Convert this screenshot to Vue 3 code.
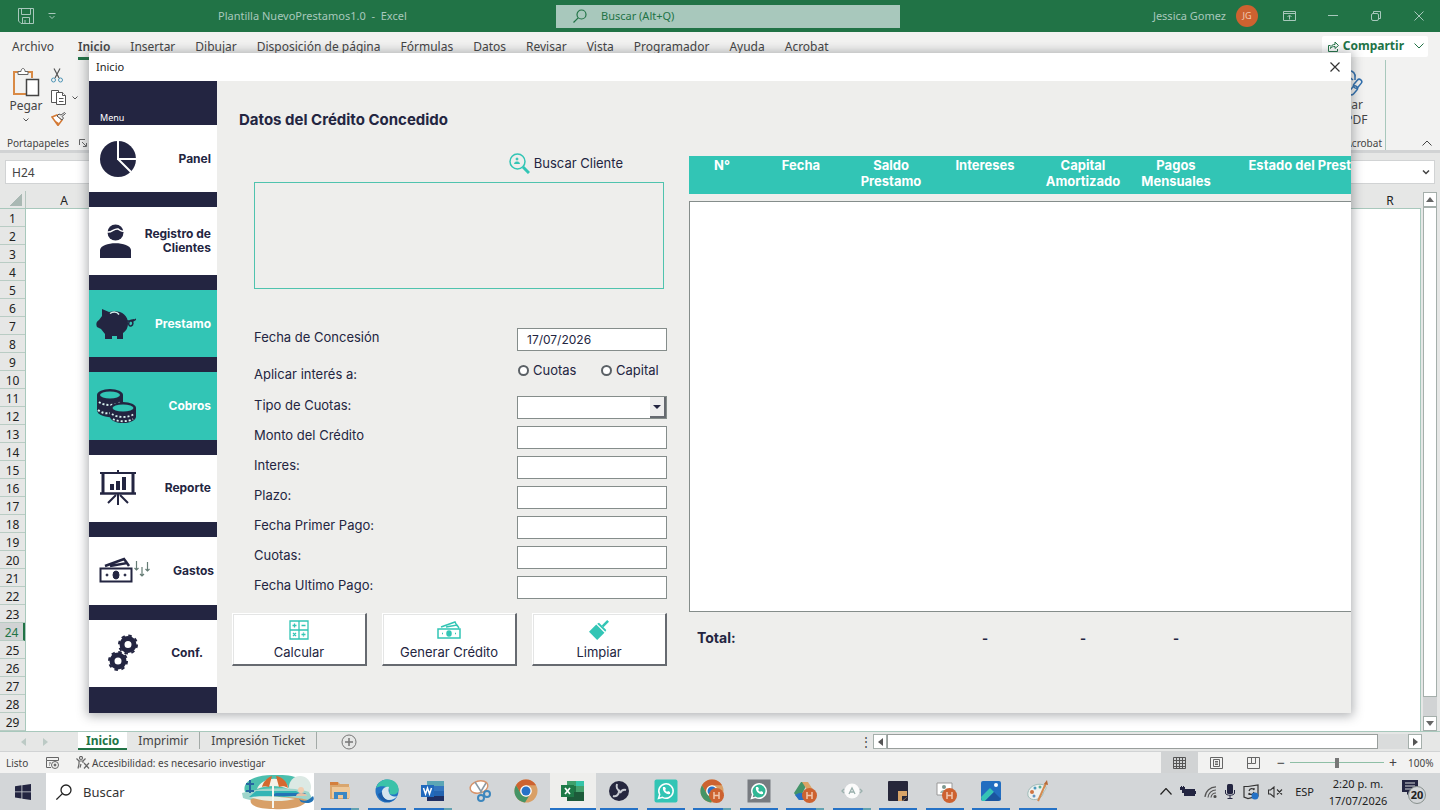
<script setup>
import { ref } from 'vue'

const ribbonTabs = ['Archivo', 'Inicio', 'Insertar', 'Dibujar', 'Disposición de página', 'Fórmulas', 'Datos', 'Revisar', 'Vista', 'Programador', 'Ayuda', 'Acrobat']
const rows = Array.from({ length: 29 }, (_, i) => i + 1)

const menu = [
  { id: 'panel', label: 'Panel' },
  { id: 'clientes', label: 'Registro de Clientes' },
  { id: 'prestamo', label: 'Prestamo', active: true },
  { id: 'cobros', label: 'Cobros', active: true },
  { id: 'reporte', label: 'Reporte' },
  { id: 'gastos', label: 'Gastos' },
  { id: 'conf', label: 'Conf.' }
]

const fields = [
  { id: 'monto', label: 'Monto del Crédito' },
  { id: 'interes', label: 'Interes:' },
  { id: 'plazo', label: 'Plazo:' },
  { id: 'primer', label: 'Fecha Primer Pago:' },
  { id: 'cuotas', label: 'Cuotas:' },
  { id: 'ultimo', label: 'Fecha Ultimo Pago:' }
]

const columns = ['N°', 'Fecha', 'Saldo Prestamo', 'Intereses', 'Capital Amortizado', 'Pagos Mensuales', 'Estado del Prest']
const totals = ['Total:', '', '', '-', '-', '-', '']

const apps = [
  { id: 'files', name: 'Explorador', run: true, many: true },
  { id: 'edge', name: 'Edge', run: true },
  { id: 'word', name: 'Word', run: true, many: true },
  { id: 'snip', name: 'Recortes' },
  { id: 'chrome', name: 'Chrome' },
  { id: 'excel', name: 'Excel', run: true, active: true },
  { id: 'obs', name: 'OBS', run: true },
  { id: 'whatsapp', name: 'WhatsApp', run: true },
  { id: 'chrome2', name: 'Chrome perfil H', run: true, many: true },
  { id: 'whatsapp2', name: 'WhatsApp Web', run: true },
  { id: 'drive', name: 'Drive', run: true, many: true },
  { id: 'anydesk', name: 'Asistente', run: true, many: true },
  { id: 'notes', name: 'Notas', run: true },
  { id: 'meet', name: 'Contactos', run: true },
  { id: 'photos', name: 'Fotos', run: true },
  { id: 'paint', name: 'Paint', run: true }
]

const fecha = ref('17/07/2026')
const tipo = ref('')
const zoom = ref(50)
</script>

<template>
  <div class="desktop">
    <header class="titlebar">
      <div class="quick">
        <button aria-label="Guardar">
          <svg width="16" height="16" viewBox="0 0 16 16" fill="none" stroke="#a8c8bc"><path d="M.5.5h15v15H3L.5 13zM3.5.5v6h9v-6M4.500 15.500v-6h7v6M7 12v3.500" /></svg>
        </button>
        <button aria-label="Personalizar">
          <svg width="8" height="8" viewBox="0 0 8 8" fill="none" stroke="#a8c8bc"><path d="M.5 1.500h7M1.500 4 4 6.500 6.500 4" /></svg>
        </button>
      </div>
      <div class="doc">Plantilla NuevoPrestamos1.0 &nbsp;-&nbsp; Excel</div>
      <label class="search">
        <svg width="14" height="14" viewBox="0 0 14 14" fill="none" stroke="#217346" stroke-width="1.200"><circle cx="8.500" cy="5.500" r="4.500" /><path d="M5.200 8.800.5 13.500" /></svg>
        <input type="text" placeholder="Buscar (Alt+Q)" aria-label="Buscar" />
      </label>
      <div class="account">
        <span>Jessica Gomez</span>
        <span class="avatar">JG</span>
      </div>
      <div class="controls">
        <button aria-label="Cinta"><svg width="13" height="10" viewBox="0 0 13 10" fill="none" stroke="#a8c8bc"><path d="M.5.5h12v9H.5zM.5 2.500h12M6.500 8.500V4.500M4.500 6l2-2 2 2" /></svg></button>
        <button aria-label="Minimizar"><svg width="10" height="10" viewBox="0 0 10 10" stroke="#a8c8bc"><path d="M0 4.500h10" /></svg></button>
        <button aria-label="Restaurar"><svg width="10" height="10" viewBox="0 0 10 10" fill="none" stroke="#a8c8bc"><rect x=".5" y="2.500" width="7" height="7" rx="1.500" /><path d="M2.500 2V.5h7v7H8" /></svg></button>
        <button aria-label="Cerrar"><svg width="10" height="10" viewBox="0 0 10 10" stroke="#a8c8bc"><path d="m.5.5 9 9m0-9-9 9" /></svg></button>
      </div>
    </header>

    <nav class="tabs">
      <a v-for="t in ribbonTabs" :key="t" href="#" :class="{ on: t === 'Inicio' }">{{ t }}</a>
      <button class="share">
        <svg width="11" height="11" viewBox="0 0 11 11" fill="none" stroke="#217346"><path d="M2.500 4.500h-2v6h9V8M2.500 7.500c.3-3 2-4 4.500-4V1l3.500 3.500L7 7.500V5.500c-2 0-3.500.3-4.500 2z" /></svg>
        <b>Compartir</b>
        <svg width="10" height="6" viewBox="0 0 10 6" fill="none" stroke="#217346"><path d="m.5.5 4.500 4.500L9.500.5" /></svg>
      </button>
    </nav>

    <section class="ribbon">
      <div class="clipboard">
        <div class="tools">
          <button class="paste">
            <svg width="28" height="30" viewBox="0 0 28 30" fill="none"><path d="M14 27H2V5h4M16 5h4v6" stroke="#d98a45" stroke-width="2" /><path d="M6 7.500v-3h3c0-4 4-4 4 0h3v3z" fill="#fff" stroke="#666" /><path d="M14.500 12.500h12v16h-12z" fill="#fff" stroke="#444" stroke-width="1.500" /></svg>
            <span>Pegar</span>
            <svg width="6" height="4" viewBox="0 0 6 4" fill="none" stroke="#555"><path d="m.5.5 2.500 2.500L5.500.5" /></svg>
          </button>
          <div class="mini">
            <svg width="12" height="15" viewBox="0 0 12 15" fill="none"><path d="M3 .5 8 10M9 .5 4 10" stroke="#555" stroke-width="1.200" /><circle cx="2.500" cy="12" r="2" stroke="#4d94b5" /><circle cx="9.500" cy="12" r="2" stroke="#4d94b5" /></svg>
            <div class="copy">
              <svg width="16" height="15" viewBox="0 0 16 15" fill="#fff" stroke="#555"><path d="M.5.5h7v12h-7z" /><path d="M5.500 2.500h6l3 3v9h-9z" /><path d="M11.500 2.500v3h3M8 8.500h4.500M8 11.500h4.500" /></svg>
              <svg width="6" height="4" viewBox="0 0 6 4" fill="none" stroke="#555"><path d="m.5.5 2.500 2.500L5.500.5" /></svg>
            </div>
            <svg width="15" height="14" viewBox="0 0 15 14"><path d="M1 5 6 3l5 5-4 5.500z" fill="#fff" stroke="#d47a35" stroke-width="1.500" /><path d="m3 8 5 3-1 2.500z" fill="#d47a35" /><path d="m6 4 5 4 1.500-2-1.500-1.500L14.500 1.500 13.500.5 10 3 8 2z" fill="#eee" stroke="#555" /></svg>
          </div>
        </div>
        <div class="caption"><span>Portapapeles</span><svg width="8" height="8" viewBox="0 0 8 8" fill="none" stroke="#666"><path d="M.5 6V.5H6M3 3l4 4M7.500 4v3.500H4" /></svg></div>
      </div>
      <div class="acrobat">
        <svg width="30" height="28" viewBox="0 0 30 28" fill="none" stroke="#2f6fae" stroke-width="1.500"><path d="M3 20V2h12c5-1 8 3 7 7v2M12 10c3-2 6-1 8 1" /><rect x="20" y="12" width="10" height="5" rx="2.500" transform="rotate(-50 25 15)" /><rect x="15" y="19" width="10" height="5" rx="2.500" transform="rotate(-50 20 21)" /></svg>
        <span>Crear</span><span>un PDF</span>
        <small>Acrobat</small>
      </div>
      <button class="collapse" aria-label="Contraer cinta"><svg width="10" height="6" viewBox="0 0 10 6" fill="none" stroke="#444"><path d="M.5 5.500 5 1l4.500 4.500" /></svg></button>
    </section>

    <section class="formula">
      <input class="namebox" type="text" value="H24" aria-label="Cuadro de nombres" />
      <div class="fx"><input type="text" aria-label="Barra de fórmulas" /><svg width="8" height="5" viewBox="0 0 8 5" fill="none" stroke="#444" stroke-width="1.500"><path d="m1 .5 3 3 3-3" /></svg></div>
    </section>

    <section class="sheet">
      <div class="grid">
        <div class="colheads"><span class="corner"></span><span class="col-a">A</span><span class="col-r">R</span></div>
        <div class="gridbody">
          <ol class="rowheads"><li v-for="r in rows" :key="r" :class="{ sel: r === 24 }">{{ r }}</li></ol>
          <div class="cells"></div>
        </div>
      </div>
      <div class="vscroll">
        <button aria-label="Arriba"><svg width="8" height="5" viewBox="0 0 8 5"><path d="m0 5 4-5 4 5z" fill="#666" /></svg></button>
        <i class="thumb"></i><i class="rest"></i>
        <button aria-label="Abajo"><svg width="8" height="5" viewBox="0 0 8 5"><path d="m0 0 4 5 4-5z" fill="#666" /></svg></button>
      </div>
    </section>

    <section class="sheettabs">
      <div class="arrows"><svg width="5" height="8" viewBox="0 0 5 8"><path d="M5 0v8L0 4z" fill="#bccac5" /></svg><svg width="5" height="8" viewBox="0 0 5 8"><path d="M0 0v8l5-4z" fill="#bccac5" /></svg></div>
      <button class="st on">Inicio</button>
      <button class="st">Imprimir</button>
      <button class="st">Impresión Ticket</button>
      <button class="add" aria-label="Hoja nueva"><svg width="16" height="16" viewBox="0 0 16 16" fill="none" stroke="#777"><circle cx="8" cy="8" r="7" /><path d="M4 8h8M8 4v8" stroke-width="1.500" /></svg></button>
      <div class="hscroll">
        <span class="dots">⋮</span>
        <button aria-label="Izquierda"><svg width="5" height="8" viewBox="0 0 5 8"><path d="M5 0v8L0 4z" fill="#555" /></svg></button>
        <i class="thumb"></i><i class="rest"></i>
        <button aria-label="Derecha"><svg width="5" height="8" viewBox="0 0 5 8"><path d="M0 0v8l5-4z" fill="#555" /></svg></button>
      </div>
    </section>

    <section class="status">
      <span class="ready">Listo</span>
      <svg width="13" height="12" viewBox="0 0 13 12" fill="none" stroke="#666"><path d="M.5.5h12v3H.5zM.5 3.500v7H5M3 6h2M3 8h1" /><circle cx="9" cy="8" r="3.500" /><circle cx="9" cy="8" r="1" fill="#555" /></svg>
      <span class="access">
        <svg width="14" height="13" viewBox="0 0 14 13" fill="none" stroke="#666" stroke-width="1.200"><circle cx="5" cy="2" r="1.500" /><path d="M.5 2.500 3 5v3l-1 4.500M9.500 2.500 7 5v2M3 5h4M5 8l-1 3.500M8 7l5 5.500M13 7l-5 5.500" /></svg>
        Accesibilidad: es necesario investigar
      </span>
      <div class="views">
        <button class="on" aria-label="Normal"><svg width="13" height="12" viewBox="0 0 13 12" fill="none" stroke="#555"><path d="M.5.5h12v11H.5zM3.500.5v11M6.500.5v11M9.500.5v11M.5 3.500h12M.5 6.500h12M.5 9.500h12" /></svg></button>
        <button aria-label="Diseño de página"><svg width="13" height="12" viewBox="0 0 13 12" fill="none" stroke="#666"><path d="M.5.5h12v11H.5zM3.500 2.500h6v7h-6zM5 4.500h3M5 6h3M5 7.500h3" /></svg></button>
        <button aria-label="Salto de página"><svg width="13" height="12" viewBox="0 0 13 12" fill="none" stroke="#666"><path d="M.5.5h12v11H.5zM4.500.5v6h-4M8.500.5v6h-4" /></svg></button>
      </div>
      <span class="sign">−</span>
      <input v-model="zoom" class="zoom" type="range" aria-label="Zoom" />
      <span class="sign">+</span>
      <span class="pct">100%</span>
    </section>

    <footer class="taskbar">
      <button class="start" aria-label="Inicio"><svg width="16" height="16" viewBox="0 0 16 16" fill="#232541"><path d="M0 2.200 6.500 1.300v6.200H0zM7.300 1.200 16 0v7.500H7.300zM0 8.300h6.500v6.200L0 13.600zM7.300 8.300H16V16l-8.700-1.200z" /></svg></button>
      <label class="tasksearch">
        <svg width="16" height="16" viewBox="0 0 16 16" fill="none" stroke="#222" stroke-width="1.300"><circle cx="10" cy="6" r="5" /><path d="m6.400 9.600-6 6" /></svg>
        <input type="text" placeholder="Buscar" aria-label="Buscar en Windows" />
        <svg class="beach" width="73" height="36" viewBox="0 0 73 36">
          <path d="M4 18C0 6 18 0 34 1c20-1 34 5 34 15z" fill="#4cbfae" />
          <ellipse cx="59" cy="13" rx="11" ry="11" fill="#dce9e4" />
          <path d="M1 19c15-5 48-7 67-1l4 8c-20 6-52 4-70-2z" fill="#9fd5cb" />
          <path d="M15 17h40l8 4-20 2H8z" fill="#32b5b5" />
          <path d="M35 19h30l-4 3H30z" fill="#2473b5" />
          <path d="M10 25c12-3 42-3 57 1-5 8-20 10-35 9-13 0-25-3-22-10z" fill="#d8a068" />
          <path d="M10 23c14-2 34 0 44 2-10 3-34 3-44-2z" fill="#e6ece2" />
          <path d="M58 25c5 3 9 2 14-3 3 5-3 9-12 6z" fill="#2473b5" />
          <path d="M16 15C20 3 44 0 48 15c-10-4-23-4-32 0z" fill="#f6f2e9" />
          <path d="M21 13c1-5 5-9 10-11l-3 11c-3-1-5-1-7 0zM35 2c7 1 11 6 12 12-3-2-6-2-9-1z" fill="#d5692f" />
          <path d="M32 12v22" stroke="#f7f7f0" stroke-width="2" />
          <path d="M9 6v13m-4-9h8M5 17h8" stroke="#2667a0" stroke-width="2" />
          <circle cx="60" cy="16" r="3" fill="#f1cdb0" /><path d="M55 22c0-4 10-4 11 0z" fill="#e6c1a6" />
        </svg>
      </label>
      <div class="apps">
        <button v-for="a in apps" :key="a.id" :aria-label="a.name" :class="{ run: a.run, active: a.active, many: a.many }">
          <svg width="24" height="24" viewBox="0 0 24 24">
            <template v-if="a.id === 'files'"><path d="M2 3h8l2 2h9v15H2z" fill="#d9a66e" /><path d="M4 8h18v11H4z" fill="#edc89a" /><path d="M2 3h8v3H2z" fill="#d47f3d" /><path d="M6 13h13v7h-4v-4h-5v4H6z" fill="#3b87c4" /></template>
            <template v-else-if="a.id === 'edge'"><circle cx="12" cy="12" r="11.500" fill="#2474c4" /><path d="M1 9C3 2 9 0 13 .5c7 .5 11 5 10.500 11C22 17 15 16 14 14c3-6-7-9-13-5z" fill="#3bc2a9" /><path d="M14 8c-5-1-8 3-7 8 1 3 4 5 7 5 4 0 7-2 8-4-5 2-10-2-8-9z" fill="#d4e5ef" /><path d="M7 13c0 6 5 10 12 8-6 4-15 1-16-6z" fill="#1b5ba6" /></template>
            <template v-else-if="a.id === 'word'"><path d="M6 2h17v5H6z" fill="#5ca6b5" /><path d="M6 7h17v5H6z" fill="#3576bf" /><path d="M6 12h17v5H6z" fill="#2464b0" /><path d="M6 17h17v5H6z" fill="#1f2f63" /><path d="M0 6h13v12H0z" fill="#2069bd" /><path d="m2.500 9 2 6 2-6 2 6 2-6" fill="none" stroke="#fff" stroke-width="1.500" /></template>
            <template v-else-if="a.id === 'snip'"><ellipse cx="11" cy="8" rx="9" ry="6" fill="#fff" stroke="#d9946a" stroke-width="1.500" transform="rotate(-15 11 8)" /><path d="m7 3 7 11M18 4l-6 10" stroke="#8b99a3" stroke-width="1.500" /><circle cx="13" cy="19" r="3" fill="none" stroke="#3c86bd" stroke-width="2" /><circle cx="19" cy="15" r="3" fill="none" stroke="#3c86bd" stroke-width="2" /></template>
            <template v-else-if="a.id === 'chrome' || a.id === 'chrome2'"><circle cx="12" cy="12" r="11.500" fill="#d9a066" /><path d="M2 6.200A11.500 11.500 0 0 1 22 6.200H12a6 6 0 0 0-5.500 8z" fill="#cd6230" /><path d="M2 6.200 7 15a6 6 0 0 0 8 2l-4 6.500A11.500 11.500 0 0 1 2 6.200z" fill="#459466" /><circle cx="12" cy="12" r="5.800" fill="#fff" /><circle cx="12" cy="12" r="4.500" fill="#2771c7" /></template>
            <template v-else-if="a.id === 'excel'"><path d="M6 2h9v5H6z" fill="#3fa06c" /><path d="M15 2h8v5h-8z" fill="#35c4a8" /><path d="M6 7h9v6H6z" fill="#217346" /><path d="M15 7h8v6h-8z" fill="#45a16d" /><path d="M6 13h17v9H6z" fill="#1d5b3a" /><path d="M0 6h13v12H0z" fill="#1e7a48" /><path d="m4 9 5 6M9 9l-5 6" stroke="#fff" stroke-width="1.700" /></template>
            <template v-else-if="a.id === 'obs'"><circle cx="12" cy="12" r="10" fill="#26273f" /><path d="M10 5c-1 3 0 6 3 7M19 11c-3-1-5 1-6 3M6 17c3 1 6-1 6-5" fill="none" stroke="#c8cbd2" stroke-width="2" /></template>
            <template v-else-if="a.id === 'whatsapp' || a.id === 'whatsapp2'"><rect x=".5" y=".5" width="23" height="23" :rx="a.id === 'whatsapp' ? 2 : 0" :fill="a.id === 'whatsapp' ? '#32c5b5' : '#777b80'" /><circle v-if="a.id === 'whatsapp2'" cx="12" cy="12" r="7" fill="#32b795" /><path d="m4.500 19.500 1.200-4A7.200 7.200 0 1 1 8.500 18.300z" fill="none" stroke="#fff" stroke-width="1.500" /><path d="M9 8c-1 4 3 8 7 7l0-2-2-1-1 1-2-2 1-1-1-2z" fill="#fff" /></template>
            <template v-else-if="a.id === 'drive'"><path d="M8 3h7l-9 18-5-7z" fill="#43946a" /><path d="M9 3h6l7 11h-6z" fill="#dba466" /><path d="M6 14h16l-4 7H6l-4-5z" fill="#2771c7" /></template>
            <template v-else-if="a.id === 'anydesk'"><circle cx="12" cy="12" r="7.500" fill="#fbfbfb" /><path d="m9 15 3-6 3 6M10 13h4M4 10l-2 2 2 2M20 10l2 2-2 2" fill="none" stroke="#9ab0ad" stroke-width="1.300" /></template>
            <template v-else-if="a.id === 'notes'"><rect x="2" y="2" width="20" height="20" rx="1" fill="#26273a" /><path d="M12 12h9v6l-4 4h-5z" fill="#d8a468" /><path d="M16 22v-5h6z" fill="#26273a" /></template>
            <template v-else-if="a.id === 'meet'"><path d="M4 4h15v12H4z" fill="#fff" stroke="#999" /><circle cx="11" cy="8" r="2" fill="#7c9990" /><path d="M7 14c1-4 7-4 8 0z" fill="#9cb6ae" /></template>
            <template v-else-if="a.id === 'photos'"><rect x="2" y="2" width="20" height="20" rx="2" fill="#236ec0" /><path d="m2 18 9-9 4 4-9 9H3z" fill="#35c4b5" /><path d="m15 13 7 7-3 2H6z" fill="#1b559f" /><circle cx="17" cy="6" r="2" fill="#fff" /></template>
            <template v-else><path d="M2 17C0 9 10 3 18 6c5 3-1 6-1 9-2 6-12 8-15 2z" fill="#eef1ee" stroke="#9ebbb9" /><circle cx="6" cy="13" r="2" fill="#cf7440" /><circle cx="9" cy="9" r="1.500" fill="#4b9bc0" /><circle cx="14" cy="8" r="1.500" fill="#57ae96" /><circle cx="8" cy="17" r="1.500" fill="#6095c0" /><path d="M20 4 12 22" stroke="#d28a50" stroke-width="2" /><path d="m18 5 3-4 1 5z" fill="#b56a38" /></template>
            <template v-if="['chrome2', 'drive', 'meet'].includes(a.id)"><circle cx="16.500" cy="16.500" r="7.500" fill="#cd6230" /><path d="M14 13v7M19 13v7M14 16.500h5" stroke="#f0c6ad" stroke-width="1.500" /></template>
          </svg>
        </button>
      </div>
      <div class="tray">
        <svg width="12" height="7" viewBox="0 0 12 7" fill="none" stroke="#222" stroke-width="1.200"><path d="m.5 6.500 5.500-6 5.500 6" /></svg>
        <svg width="16" height="11" viewBox="0 0 16 11" fill="#232541"><path d="M3 3h12v7H4V7H2zM15 5h1v3h-1z" /><path d="M0 1h1V0h1v1h1V0h1v1h1v3H3v3H2V4H0z" /></svg>
        <svg width="13" height="12" viewBox="0 0 13 12" fill="none" stroke="#555" stroke-width="1.200"><path d="M1 11A11 11 0 0 1 12 .8M4 11.500A8 8 0 0 1 12 4M7 11.500A5 5 0 0 1 12 7" /><circle cx="11" cy="10.500" r="1" fill="#222" /></svg>
        <svg width="10" height="15" viewBox="0 0 10 15"><rect x="2" width="6" height="10" rx="1.500" fill="#232541" /><path d="M.5 6v3c0 3 9 3 9 0V6M5 11.500V14M2.500 14.500h5" fill="none" stroke="#232541" /></svg>
        <svg width="17" height="16" viewBox="0 0 17 16" fill="none" stroke="#333" stroke-width="1.200"><path d="M1 2.500h4L15 1v11l-10 2.500L1 13zM1 2.500V13M6 7c1-3 4-3 5-1V4M11 8c-1 3-4 3-5 1v2" /><circle cx="12" cy="12" r="3.500" fill="#2572c6" stroke="none" /></svg>
        <svg width="15" height="12" viewBox="0 0 15 12" fill="none" stroke="#333" stroke-width="1.100"><path d="M.5 4h2L6 1v10L2.500 8h-2zM9 3.500l5 5m0-5-5 5" /></svg>
        <span>ESP</span>
        <div class="clock"><span>2:20 p. m.</span><span>17/07/2026</span></div>
        <div class="notice"><svg width="16" height="15" viewBox="0 0 16 15"><path d="M0 0h16v12h-8l-3 3v-3H0z" fill="#232541" /><path d="M3 3h10M3 6h10M3 9h6" stroke="#d3d6d8" /></svg><b>20</b></div>
      </div>
    </footer>

    <div class="dialog" role="dialog" aria-label="Inicio">
      <div class="dlgtitle"><span>Inicio</span><button aria-label="Cerrar"><svg width="10" height="10" viewBox="0 0 10 10" stroke="#333" stroke-width="1.200"><path d="m.5.5 9 9m0-9-9 9" /></svg></button></div>
      <div class="dlgbody">
        <aside>
          <div class="menuhead">Menu</div>
          <div class="menulist">
            <button v-for="m in menu" :key="m.id" :class="[m.id, { active: m.active }]">
              <svg v-if="m.id === 'panel'" width="36" height="36" viewBox="0 0 36 36"><circle cx="18" cy="18" r="18" fill="#232541" /><path d="M18 0v18h18M18 18l13 13" fill="none" stroke="#fff" stroke-width="2" /></svg>
              <svg v-else-if="m.id === 'clientes'" width="31" height="34" viewBox="0 0 31 34" fill="#232541"><circle cx="15.500" cy="8.500" r="8" /><path d="M0 34v-8c1-9 30-9 31 0v8z" /><path d="M7 8c5 1 7-4 11-3 2 1 3 3 6 2" fill="none" stroke="#fff" stroke-width="1.500" /></svg>
              <svg v-else-if="m.id === 'prestamo'" width="40" height="30" viewBox="0 0 40 30" fill="#232541"><path d="m6 0 7 3c10-3 19 2 19 11 0 5-2 8-5 10v6h-6v-3h-5v3h-7v-5l-4-5-4-2c-1-3-1-5 2-7l3-4z" /><path d="M14 4.500c3-2 7-2 9 1" fill="none" stroke="#d8f3ee" stroke-width="1.500" /><path d="M31 12h6l3-2M38 11c-7-1-6 7-3 6s2-5 0-5" fill="none" stroke="#232541" stroke-width="1.500" /></svg>
              <svg v-else-if="m.id === 'cobros'" width="40" height="34" viewBox="0 0 40 34" fill="#232541"><path d="M1 6h26v21c-5 3-26 2-26-6z" /><ellipse cx="14" cy="6" rx="13" ry="6" /><ellipse cx="14" cy="6" rx="10" ry="3.500" fill="#32c5b5" /><path d="M3 13c5 4 16 4 22 0M2 21c4 3 9 4 13 3" fill="none" stroke="#d8f3ee" stroke-width="2" stroke-dasharray="2 2" /><path d="M14 19h26v9c-2 8-24 8-26 0z" /><ellipse cx="27" cy="19" rx="13" ry="6" /><ellipse cx="27" cy="19" rx="10.500" ry="3.500" fill="#32c5b5" /><path d="M16 25c5 4 17 4 22 0M17 30c5 3 15 3 20 0" fill="none" stroke="#d8f3ee" stroke-width="1.800" stroke-dasharray="2 2" /></svg>
              <svg v-else-if="m.id === 'reporte'" width="36" height="36" viewBox="0 0 36 36" fill="none" stroke="#232541"><path d="M18 0v3M0 3h36" stroke-width="2" /><path d="M3 4v19M33 4v19" stroke-width="3" /><path d="M0 23.500h36" stroke-width="2.500" /><path d="M12 20v-6M18 20v-9M24 20V7" stroke-width="4" /><path d="M18 24v11M16 25l-8 8M20 25l8 8" stroke-width="2" /></svg>
              <svg v-else-if="m.id === 'gastos'" width="51" height="27" viewBox="0 0 51 27" fill="none" stroke="#232541"><path d="m6 9 19-7 3 4M11 9l17-3 2 3" stroke-width="2.500" /><path d="M1.500 11.500h31v13h-31z" stroke-width="2" /><ellipse cx="17" cy="18" rx="3" ry="4" fill="#232541" /><circle cx="8" cy="18" r="1" fill="#232541" /><circle cx="26" cy="18" r="1" fill="#232541" /><path d="M37.500 4v9m-2-2 2 2 2-2M43 10v9m-2-2 2 2 2-2M48.500 5v9m-2-2 2 2 2-2" stroke="#657c75" stroke-width="1.200" /></svg>
              <svg v-else width="32" height="38" viewBox="0 0 32 38" fill="none" stroke="#232541"><circle cx="21" cy="10.500" r="6" stroke-width="5" /><circle cx="21" cy="10.500" r="9" stroke-width="2" stroke-dasharray="3.500 3.570" /><circle cx="11" cy="27" r="6" stroke-width="5" /><circle cx="11" cy="27" r="9" stroke-width="2" stroke-dasharray="3.500 3.570" /></svg>
              <span>{{ m.label }}</span>
            </button>
          </div>
        </aside>

        <form class="form" @submit.prevent>
          <h1>Datos del Crédito Concedido</h1>
          <button type="button" class="find">
            <svg width="21" height="21" viewBox="0 0 21 21" fill="none" stroke="#32c5b5"><circle cx="8.500" cy="8.500" r="7.500" stroke-width="1.500" /><circle cx="8" cy="6" r="1" fill="#32c5b5" /><path d="M5.500 10.500c0-2 5-2 5 0z" fill="#32c5b5" /><path d="m14 14 6 6" stroke-width="3" /></svg>
            Buscar Cliente
          </button>
          <div class="client"></div>
          <div class="fields">
            <div class="row"><label for="fecha">Fecha de Concesión</label><input id="fecha" v-model="fecha" type="text" /></div>
            <div class="row radios" role="radiogroup" aria-labelledby="aplicar">
              <span id="aplicar">Aplicar interés a:</span>
              <div><label><input type="radio" name="aplicar" />Cuotas</label><label><input type="radio" name="aplicar" />Capital</label></div>
            </div>
            <div class="row">
              <label for="tipo">Tipo de Cuotas:</label>
              <div class="combo"><select id="tipo" v-model="tipo"><option value=""></option><option>Mensual</option></select><i><svg width="8" height="4" viewBox="0 0 8 4"><path d="M0 0h8L4 4z" fill="#232541" /></svg></i></div>
            </div>
            <div v-for="f in fields" :key="f.id" class="row"><label :for="f.id">{{ f.label }}</label><input :id="f.id" type="text" /></div>
          </div>
          <div class="actions">
            <button type="button">
              <svg width="20" height="20" viewBox="0 0 20 20" fill="none" stroke="#32c5b5" stroke-width="1.300"><path d="M1 1h18v18H1zM10 1v18M1 10h18M3.500 5.500h4M5.500 3.500v4M12.500 5.500h4M4 13l3 3M7 13l-3 3M12.500 14.500h4M14.500 12.500v1M14.500 15.500v1" /></svg>
              Calcular
            </button>
            <button type="button">
              <svg width="24" height="20" viewBox="0 0 24 20" fill="none" stroke="#32c5b5" stroke-width="1.500"><path d="m4 7 14-5 2 4M9 7l11-2 2 3M1 9h22v9H1z" /><ellipse cx="12" cy="13.500" rx="2" ry="2.500" fill="#32c5b5" /><path d="M5 13.500h1M18 13.500h1" /></svg>
              Generar Crédito
            </button>
            <button type="button">
              <svg width="22" height="22" viewBox="0 0 22 22" fill="#32c5b5"><path d="m0 13 8-8 9 9-8 8z" /><path d="m9 4 2-1 8 8-1 2z" /><path d="m14 6 6-6 2 2-6 6z" /></svg>
              Limpiar
            </button>
          </div>
        </form>

        <div class="plan">
          <table>
            <thead><tr><th v-for="c in columns" :key="c" scope="col">{{ c }}</th></tr></thead>
            <tbody><tr><td></td></tr></tbody>
            <tfoot><tr><td v-for="(t, i) in totals" :key="i">{{ t }}</td></tr></tfoot>
          </table>
        </div>
      </div>
    </div>
  </div>
</template>

<style>
body { margin: 0; }
</style>

<style scoped>
* { box-sizing: border-box; }
button { border: 0; padding: 0; background: none; font: inherit; color: inherit; cursor: pointer; }
input, select { font: inherit; color: inherit; margin: 0; padding: 0; border: 0; min-width: 0; border-radius: 0; outline: 0; }
svg { display: block; flex: none; }
i { font-style: normal; }
a { color: inherit; text-decoration: none; }

.desktop { position: relative; display: flex; flex-direction: column; height: 100vh; min-height: 640px; overflow: hidden; background: #e6e7e6; font: 12px/16px "Segoe UI", "Noto Sans", "Open Sans", sans-serif; color: #444; }

.titlebar { display: grid; grid-template-columns: 218px 338px 344px 1fr auto; align-items: center; height: 32px; flex: none; background: #217346; color: #a8c8bc; font-size: 11px; }
.quick { display: flex; align-items: center; gap: 14px; padding-left: 18px; }
.search { display: flex; align-items: center; gap: 14px; height: 23px; padding-left: 17px; background: #a8c8bc; color: #217346; }
.search input { flex: 1; background: transparent; }
.search input::placeholder { color: #217346; opacity: 1; }
.account { display: flex; align-items: center; justify-content: flex-end; gap: 10px; }
.avatar { width: 22px; height: 22px; border-radius: 50%; background: #cd6230; color: #f3cbb4; font-size: 9px; line-height: 22px; text-align: center; }
.controls { display: flex; margin-left: 10px; }
.controls button { width: 43px; height: 32px; display: grid; place-items: center; }

.tabs { display: flex; align-items: center; gap: 20px; height: 28px; flex: none; padding: 0 12px; background: #f2f2f1; }
.tabs a { height: 28px; line-height: 30px; white-space: nowrap; }
.tabs a:first-child { margin-right: 4px; }
.tabs .on { font-weight: 600; border-bottom: 3px solid #217346; }
.share { display: flex; align-items: center; gap: 4px; height: 21px; margin-left: auto; padding: 0 4px 0 6px; border-radius: 2px; background: #fff; color: #217346; }
.share svg:last-child { margin-left: 6px; }

.ribbon { display: flex; height: 93px; flex: none; background: #f2f2f1; border-bottom: 3px solid #d1d3d4; }
.clipboard { width: 92px; padding: 7px 0 0 7px; display: flex; flex-direction: column; justify-content: space-between; }
.tools { display: flex; gap: 6px; }
.paste { display: flex; flex-direction: column; align-items: center; width: 38px; }
.paste span { line-height: 17px; }
.paste svg:last-child { margin-top: 4px; }
.mini { display: flex; flex-direction: column; align-items: flex-start; gap: 7px; padding-top: 1px; }
.copy { display: flex; align-items: center; gap: 5px; }
.caption { display: flex; align-items: center; justify-content: space-between; font-size: 10px; padding-right: 5px; line-height: 14px; }
.acrobat { display: flex; flex-direction: column; align-items: center; width: 76px; margin-left: auto; padding-top: 9px; border-right: 1px solid #a8c8bc; }
.acrobat span { line-height: 15px; }
.acrobat small { align-self: flex-end; margin-top: auto; padding-right: 3px; font-size: 10px; line-height: 14px; }
.collapse { width: 54px; display: flex; align-items: flex-end; justify-content: flex-end; padding: 0 8px 4px 0; }

.formula { display: flex; gap: 8px; height: 38px; flex: none; padding: 7px 5px; }
.namebox { width: 110px; height: 24px; padding: 0 6px; border: 1px solid #d1d3d4; background: #fff; }
.fx { flex: 1; display: flex; align-items: center; height: 24px; padding-right: 4px; border: 1px solid #d1d3d4; background: #fff; }
.fx input { flex: 1; }

.sheet { display: flex; flex: 1; min-height: 0; }
.grid { flex: 1; display: flex; flex-direction: column; min-width: 0; }
.colheads { display: flex; height: 18px; flex: none; border-bottom: 1px solid #a8c8bc; line-height: 19px; font-size: 12px; color: #222; }
.corner { width: 26px; border-right: 1px solid #b4c5be; background: linear-gradient(135deg, transparent 50%, #a9b8b3 50%) 10px 3px / 12px 12px no-repeat; }
.col-a { width: 76px; text-align: center; }
.col-r { width: 62px; margin-left: auto; text-align: center; }
.gridbody { display: flex; flex: 1; min-height: 0; overflow: hidden; }
.rowheads { list-style: none; margin: 0; padding: 0; width: 26px; flex: none; border-right: 1px solid #a8c8bc; color: #222; }
.rowheads li { height: 18px; border-bottom: 1px solid #b9ccc4; text-align: center; line-height: 19px; }
.rowheads .sel { background: #d1d3d4; color: #217346; border-right: 2px solid #217346; }
.cells { flex: 1; background: #fff; border-right: 1px solid #a8c8bc; }
.vscroll { display: flex; flex-direction: column; width: 19px; padding: 1px 3px 0 2px; }
.vscroll button, .hscroll button { display: grid; place-items: center; width: 14px; height: 15px; flex: none; border: 1px solid #a5afab; background: #fff; }
.vscroll .thumb { flex: 490; border: 1px solid #a5afab; background: #fff; }
.vscroll .rest { flex: 19; background: #d1d3d4; }

.sheettabs { display: flex; height: 21px; flex: none; border-top: 1px solid #a8c8bc; border-bottom: 1px solid #d1d3d4; }
.arrows { display: flex; align-items: center; gap: 17px; width: 78px; padding-left: 21px; }
.st { height: 17px; padding: 0 11px; line-height: 15px; }
.st + .st { border-right: 1px solid #a3aaa7; }
.st.on { padding: 0 8px; height: 18px; background: #fff; color: #217346; font-weight: 700; border-bottom: 2px solid #217346; }
.add { margin: 2px 0 0 24px; display: flex; }
.hscroll { display: flex; align-items: center; width: 580px; margin-left: auto; padding-right: 18px; }
.dots { width: 13px; }
.hscroll .thumb { flex: 488; height: 15px; border: 1px solid #999e9c; background: #fff; }
.hscroll .rest { flex: 30; height: 15px; background: #dadcdc; }

.status { display: flex; align-items: center; height: 21px; flex: none; padding-left: 6px; background: #f2f2f1; font-size: 10px; }
.ready { width: 40px; }
.access { display: flex; align-items: center; gap: 2px; margin-left: 17px; }
.views { display: flex; margin-left: auto; height: 21px; }
.views button { display: grid; place-items: center; width: 37px; }
.views .on { background: #d1d3d4; }
.sign { width: 18px; text-align: center; font-size: 14px; }
.zoom { appearance: none; width: 94px; height: 10px; background: linear-gradient(#8fbfa6, #8fbfa6) center / 100% 1px no-repeat; }
.zoom::-webkit-slider-thumb { appearance: none; width: 4px; height: 10px; background: #777; }
.pct { width: 38px; padding-left: 6px; }

.taskbar { display: flex; height: 37px; flex: none; background: #d3d6d8; color: #222; }
.start { width: 46px; flex: none; display: grid; place-items: center; }
.tasksearch { display: flex; align-items: center; width: 268px; background: #fff; padding-left: 10px; }
.tasksearch input { flex: 1; margin-left: 11px; font-size: 13px; background: transparent; }
.tasksearch input::placeholder { color: #333; opacity: 1; }
.apps { display: grid; grid-template-columns: repeat(16, 1fr); flex: 0 1 744px; margin-left: 3px; }
.apps button { display: flex; flex-direction: column; align-items: center; justify-content: space-between; padding-top: 6px; }
.apps .run::after { content: ""; width: 38px; height: 2px; background: #2572c6; }
.apps .many::after { background: linear-gradient(90deg, #2572c6 80%, #62a2b2 80%); }
.apps .active { background: #eeeeec; }
.apps .active::after { width: 100%; }
.tray { display: flex; align-items: center; gap: 8px; margin-left: auto; padding-right: 12px; }
.tray > span { margin-left: 4px; font-size: 11px; }
.clock { display: flex; flex-direction: column; align-items: center; width: 72px; font-size: 11px; line-height: 17px; }
.notice { display: flex; width: 26px; }
.notice b { width: 18px; height: 18px; margin: 6px 0 0 -10px; border: 1px solid #88918e; border-radius: 50%; background: #d3d6d8; font-size: 11px; line-height: 16px; text-align: center; flex: none; }

.dialog { position: absolute; inset: 53px 89px 97px; display: flex; flex-direction: column; background: #eeeeec; box-shadow: 0 1px 10px 2px rgba(60, 65, 70, .4); font-family: "Century Gothic", "URW Gothic", Inter, sans-serif; color: #232541; }
.dlgtitle { display: flex; align-items: center; justify-content: space-between; height: 28px; flex: none; padding: 0 11px 0 7px; background: #fff; font: 11px/28px "Segoe UI", "Noto Sans", sans-serif; color: #222; }
.dlgbody { display: flex; flex: 1; min-height: 0; }

aside { width: 128px; flex: none; display: flex; flex-direction: column; padding-bottom: 26px; background: #232541; }
.menuhead { height: 44px; flex: none; padding: 29px 0 0 11px; color: #fff; font: 9px/15px "Noto Sans", sans-serif; }
.menulist { display: flex; flex-direction: column; gap: 15px; flex: 1; }
.menulist button { flex: 1; display: flex; align-items: center; justify-content: space-between; padding: 0 6px 0 11px; background: #fff; font-size: 12px; line-height: 14px; font-weight: 700; text-align: right; }
.menulist .active { background: #32c5b5; color: #fff; padding-left: 7px; }
.menulist .gastos { padding: 0 3px 0 10px; }
.menulist .conf { padding: 0 14px 0 18px; }

.form { width: 472px; flex: none; display: flex; flex-direction: column; padding: 28px 22px 0 15px; font-size: 13px; line-height: 18px; }
h1 { margin: 0 0 21px 7px; font-size: 15px; line-height: 22px; font-weight: 700; }
.find { display: flex; align-items: center; gap: 4px; align-self: flex-end; margin-right: 44px; height: 22px; }
.client { height: 107px; flex: none; margin: 8px 3px 0 22px; border: 1px solid #4fc3ae; }
.fields { display: flex; flex-direction: column; gap: 7px; margin: 39px 0 14px 22px; }
.row { display: grid; grid-template-columns: 1fr 150px; height: 23px; align-items: start; }
.row > input, .combo { height: 23px; border: 1px solid #858d8b; background: #fff; }
#fecha { padding-left: 9px; font-size: 12px; }
.radios { height: 22px; margin: 3px 0 6px; }
.radios > span { align-self: end; }
.radios div { display: grid; grid-template-columns: 83px 1fr; padding-left: 1px; }
.radios label { display: flex; align-items: center; gap: 4px; }
.radios input { appearance: none; width: 11px; height: 11px; border: 2px solid #5b6166; border-radius: 50%; background: #fff; }
.combo { display: flex; }
.combo select { appearance: none; flex: 1; background: #fff; }
.combo i { display: grid; place-items: center; width: 16px; background: #eee; border-right: 2px solid #666a70; border-bottom: 2px solid #666a70; }
.actions { display: grid; grid-template-columns: repeat(3, 1fr); gap: 15px; }
.actions button { display: flex; flex-direction: column; align-items: center; justify-content: space-between; height: 53px; padding: 6px 0 3px; background: #fff; border: 1px solid #fff; border-right: 2px solid #666a70; border-bottom: 2px solid #666a70; box-shadow: inset 1px 1px #e4e5e5; line-height: 18px; }
.actions svg { max-height: 20px; }

.plan { flex: 1; min-width: 0; padding: 75px 0 66px; display: flex; }
table { display: flex; flex-direction: column; flex: 1; min-width: 0; font-size: 13px; line-height: 16px; font-weight: 700; }
thead tr, tfoot tr { display: grid; grid-template-columns: 66px 92px 88px 100px 96px 90px 1fr; }
thead { display: block; height: 38px; background: #32c5b5; color: #fff; }
th { padding: 1px 4px; text-align: center; }
th:last-child { padding: 1px 0; text-align: right; white-space: nowrap; }
tbody { display: flex; flex: 1; margin-top: 7px; border: 1px solid #858d8b; border-right: 0; background: #fff; }
tfoot { display: block; padding-top: 17px; line-height: 18px; }
tfoot td { padding: 0; text-align: center; }
tfoot td:first-child { padding-left: 8px; text-align: left; font-size: 14px; }
</style>
